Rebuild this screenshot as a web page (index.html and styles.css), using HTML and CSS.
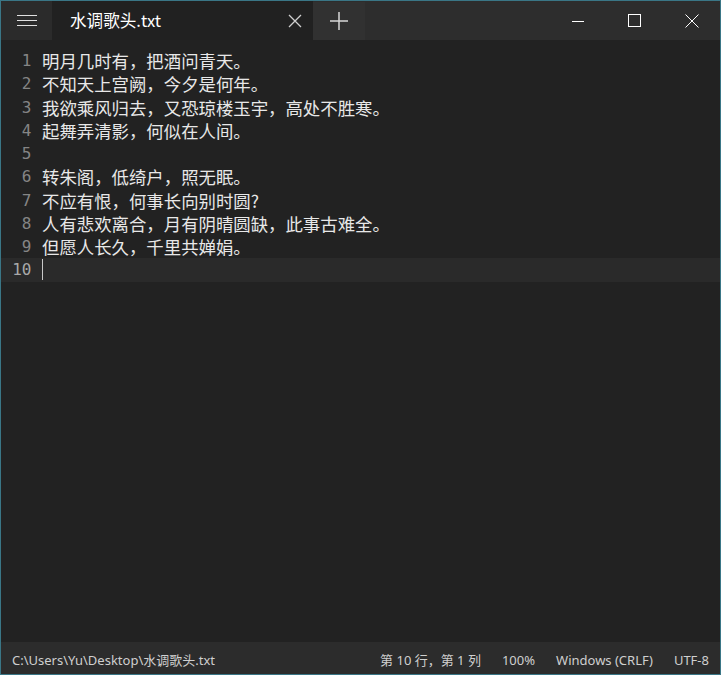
FILE: index.html
```html
<!DOCTYPE html>
<html lang="zh">
<head>
<meta charset="utf-8">
<title>水调歌头.txt - Notepads</title>
<link rel="stylesheet" href="styles.css">
</head>
<body>
<div class="window">
  <div class="titlebar">
    <div class="menu-btn">
      <svg width="20" height="12" viewBox="0 0 20 12"><path d="M0 .5H20M0 5.5H20M0 10.5H20" stroke="#e0e0e0" stroke-width="1"/></svg>
    </div>
    <div class="tab">
      <span class="tab-title">水调歌头.txt</span>
      <span class="tab-close">
        <svg width="14" height="14" viewBox="0 0 14 14"><path d="M1 1L13 13M13 1L1 13" stroke="#cfcfcf" stroke-width="1.3"/></svg>
      </span>
    </div>
    <div class="add-btn">
      <svg width="18" height="18" viewBox="0 0 18 18"><path d="M9 0V18M0 9H18" stroke="#d8d8d8" stroke-width="1.5"/></svg>
    </div>
    <div class="drag"></div>
    <div class="cap-btn">
      <svg width="12" height="12" viewBox="0 0 12 12"><path d="M0 6.5H12" stroke="#fff" stroke-width="1"/></svg>
    </div>
    <div class="cap-btn">
      <svg width="13" height="13" viewBox="0 0 13 13"><rect x=".5" y=".5" width="12" height="12" fill="none" stroke="#fff" stroke-width="1"/></svg>
    </div>
    <div class="cap-btn">
      <svg width="14" height="14" viewBox="0 0 14 14"><path d="M.5 .5L13.5 13.5M13.5 .5L.5 13.5" stroke="#fff" stroke-width="1"/></svg>
    </div>
  </div>

  <div class="editor">
    <div class="line"><span class="ln">1</span><span class="tx">明月几时有，把酒问青天。</span></div>
    <div class="line"><span class="ln">2</span><span class="tx">不知天上宫阙，今夕是何年。</span></div>
    <div class="line"><span class="ln">3</span><span class="tx">我欲乘风归去，又恐琼楼玉宇，高处不胜寒。</span></div>
    <div class="line"><span class="ln">4</span><span class="tx">起舞弄清影，何似在人间。</span></div>
    <div class="line"><span class="ln">5</span><span class="tx"></span></div>
    <div class="line"><span class="ln">6</span><span class="tx">转朱阁，低绮户，照无眠。</span></div>
    <div class="line"><span class="ln">7</span><span class="tx">不应有恨，何事长向别时圆?</span></div>
    <div class="line"><span class="ln">8</span><span class="tx">人有悲欢离合，月有阴晴圆缺，此事古难全。</span></div>
    <div class="line"><span class="ln">9</span><span class="tx">但愿人长久，千里共婵娟。</span></div>
    <div class="line current"><span class="ln">10</span><span class="tx"><span class="caret"></span></span></div>
  </div>

  <div class="statusbar">
    <span class="path">C:\Users\Yu\Desktop\水调歌头.txt</span>
    <div class="status-right">
      <span>第 10 行，第 1 列</span>
      <span>100%</span>
      <span>Windows (CRLF)</span>
      <span>UTF-8</span>
    </div>
  </div>
</div>
</body>
</html>
```

FILE: styles.css
```css
html, body {
  margin: 0;
  padding: 0;
  background: #222222;
}

.window {
  width: 721px;
  height: 675px;
  box-sizing: border-box;
  border: 1px solid #3a7686;
  display: flex;
  flex-direction: column;
  background: #222222;
  font-family: "Noto Sans", "Noto Sans CJK SC", sans-serif;
  overflow: hidden;
}

.titlebar {
  height: 39px;
  display: flex;
  background: #2d2d2d;
  flex: none;
}

.menu-btn {
  width: 51px;
  display: flex;
  align-items: center;
  justify-content: center;
  background: #2b2b2b;
  padding-left: 1px;
  box-sizing: border-box;
}

.tab {
  width: 261px;
  background: #212121;
  display: flex;
  align-items: center;
  padding-left: 18px;
  box-sizing: border-box;
}

.tab-title {
  flex: 1;
  color: #ffffff;
  font-family: "Noto Sans CJK SC", sans-serif;
  font-size: 16.6px;
  line-height: 20px;
  padding-bottom: 1px;
}

.tab-close {
  width: 36px;
  display: flex;
  justify-content: center;
  align-items: center;
}

.add-btn {
  width: 52px;
  background: #313131;
  display: flex;
  align-items: center;
  justify-content: center;
  margin-top: 1px;
}

.drag {
  flex: 1;
}

.cap-btn {
  width: 57px;
  display: flex;
  align-items: center;
  justify-content: center;
}

.editor {
  flex: 1;
  padding-top: 9px;
  background: #222222;
}

.line {
  display: flex;
  height: 23.25px;
  align-items: center;
}

.line.current {
  background: #2a2a2a;
}

.ln {
  width: 30px;
  text-align: right;
  font-family: "DejaVu Sans Mono", monospace;
  font-size: 16px;
  line-height: 23px;
  color: #858585;
  letter-spacing: -0.3px;
}

.current .ln {
  color: #a8a8a8;
}

.tx {
  margin-left: 11px;
  color: #e8e8e8;
  font-family: "Noto Sans CJK SC", sans-serif;
  font-size: 17.4px;
  line-height: 23px;
  white-space: pre;
  display: flex;
  align-items: center;
  height: 23px;
}

.caret {
  display: block;
  width: 1px;
  height: 21px;
  background: #c8c8c8;
}

.statusbar {
  height: 32px;
  flex: none;
  background: #2c2c2c;
  display: flex;
  align-items: center;
  justify-content: space-between;
  padding: 3px 11px 0 11px;
  box-sizing: border-box;
  color: #cfcfcf;
  font-size: 13px;
  line-height: 18px;
  font-family: "Noto Sans", "Noto Sans CJK SC", sans-serif;
}

.status-right {
  display: flex;
  gap: 21px;
}
```
